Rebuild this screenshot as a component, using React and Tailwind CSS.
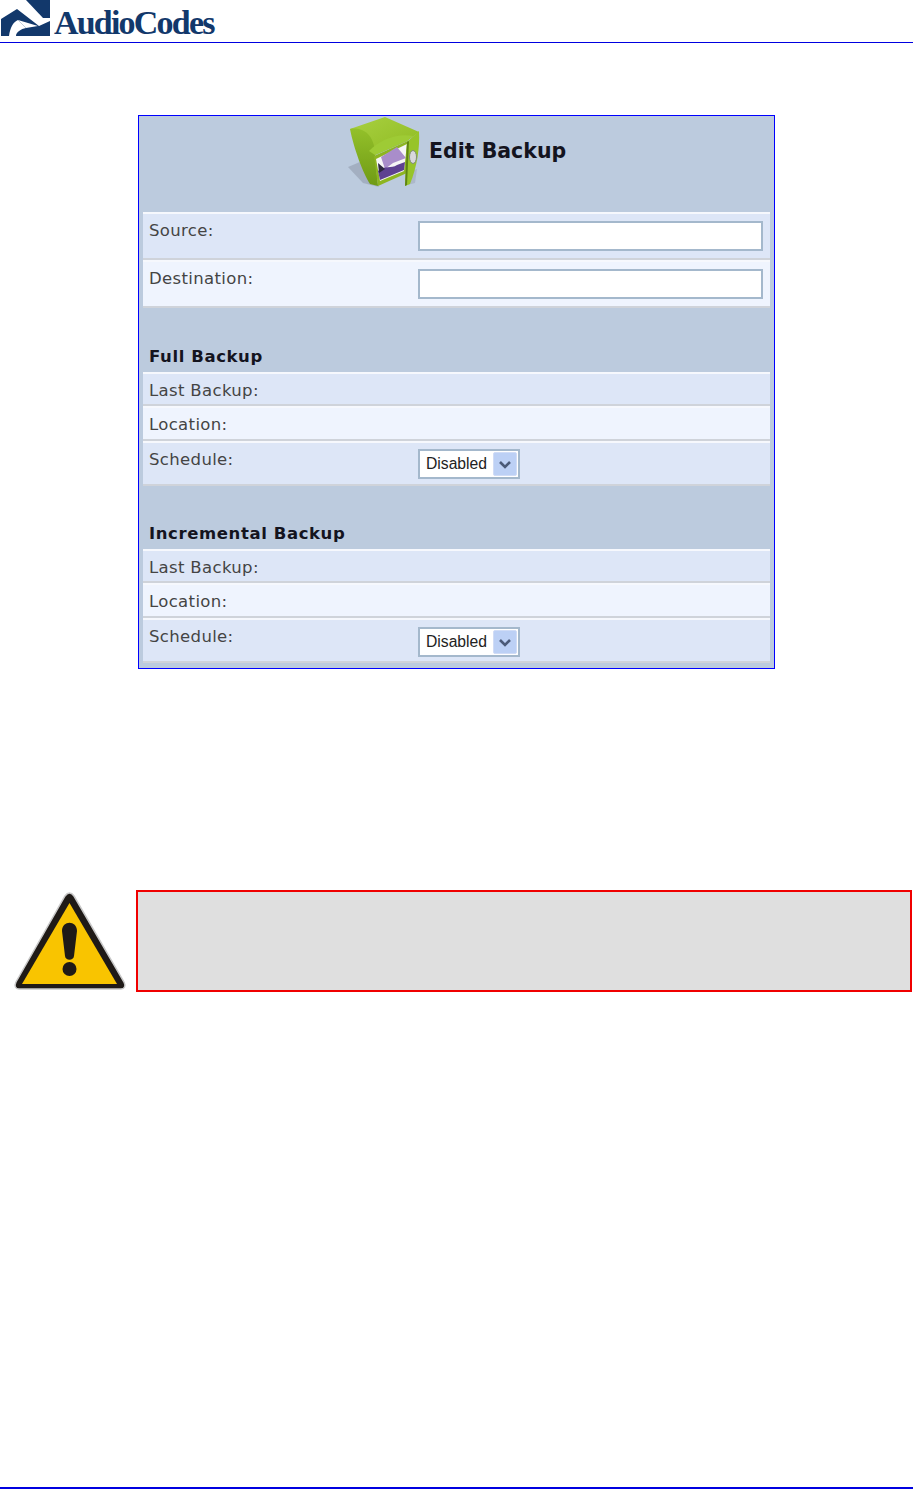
import React from 'react';

const labelFont = "font-['DejaVu_Sans',sans-serif]";

const LogoMark = () => (
    <svg width="49" height="37" viewBox="0 0 49 37" className="shrink-0">
        {/* upper right block */}
        <path d="M25 0 H49 V18 H42 Z" fill="#12386b" />
        {/* lower block under the white arch */}
        <path d="M0 19 L16 9 L38 26 L49 21 V36 H0 Z" fill="#12386b" />
        {/* white curve and wedge cut out of the block */}
        <path d="M8 36 C9 28 12 22 17 20 L25 28 C20 29 15 32 15 36 Z" fill="#fff" />
        <path d="M17 20 L37 26 L25 28 Z" fill="#fff" />
    </svg>
);

const SafeIcon = () => (
    <svg width="80" height="73" viewBox="0 3 80 73" className="shrink-0">
        <defs>
            <linearGradient id="safeTop" x1="0" y1="0" x2="1" y2="1">
                <stop offset="0" stopColor="#a8d040" />
                <stop offset="1" stopColor="#8fbb22" />
            </linearGradient>
            <linearGradient id="safeSide" x1="0" y1="0" x2="0" y2="1">
                <stop offset="0" stopColor="#93c02a" />
                <stop offset="1" stopColor="#6f9a14" />
            </linearGradient>
        </defs>
        <path d="M3 54 L22 46 L34 74 L18 70 Z" fill="#8e99aa" opacity="0.55" />
        <path d="M62 60 L72 56 L70 70 L62 72 Z" fill="#9ba6b6" opacity="0.5" />
        {/* body */}
        <path d="M5 16 L40 4 L74 19 L62 28 L30 42 Z" fill="url(#safeTop)" />
        <path d="M5 16 C14 14 30 18 30 42 L33 73 L25 71 C18 60 9 36 5 16 Z" fill="url(#safeSide)" />
        <path d="M24 38 C34 28 50 20 68 23 L62 28 L30 42 Z" fill="#9ecb35" />
        {/* opening */}
        <path d="M29 43 L65 27 L62 60 L33 73 Z" fill="#8db521" />
        <path d="M31 46 L62 31 L59 58 L35 68 Z" fill="#f6f6f6" />
        <path d="M36 44 L52 34 L61 45 L48 50 L40 56 Z" fill="#a98dca" />
        <path d="M33 58 C40 52 46 56 52 52 L60 49 L59 57 L35 67 Z" fill="#5e4191" />
        <path d="M33 50 L40 56 L34 60 Z" fill="#2e2840" />
        {/* open door */}
        <path d="M62 29 L74 18 C75 34 72 54 65 71 L60 73 Z" fill="#97c42a" />
        <path d="M62 29 L64 28 L62 72 L60 73 Z" fill="#5f8412" />
        <ellipse cx="68" cy="44" rx="3.500" ry="6.500" fill="#d8d8dc" stroke="#7f8a78" strokeWidth="1" />
    </svg>
);

const WarningIcon = () => (
    <svg width="114" height="100" viewBox="0 0 114 100" className="shrink-0">
        <path d="M56.500 3 C54.500 3 53 4.500 52 6 L3 92 C1 96 2.500 99 6 99 L108 99 C111.500 99 113 96 111 92 L61 6 C60 4.500 58.500 3 56.500 3 Z" fill="#1f1a17" stroke="#c9c9c9" strokeWidth="1.500" />
        <path d="M56.500 13 L9 94 L104 94 Z" fill="#f9c400" />
        <path d="M49 41 C49 30 64 30 64 41 L61 66 C60.500 71 52.500 71 52 66 Z" fill="#1f1a17" />
        <circle cx="56.500" cy="79" r="7" fill="#1f1a17" />
    </svg>
);

const SelectBox = ({ lift }) => (
    <div className={`${lift} w-[102px] h-[30px] bg-white border-2 border-[#a4b8cc] flex items-center justify-between pl-[6px] pr-[1px]`}>
        <span className="font-['Liberation_Sans',sans-serif] text-[#222] text-[16px] scale-x-[0.98] origin-left">Disabled</span>
        <span className="w-[24px] h-[24px] bg-[#bcd0f5] border border-[#d0dcf6] rounded-[2px] flex items-center justify-center">
            <svg width="14" height="9" viewBox="0 0 14 9">
                <path d="M2 2 L7 7 L12 2" fill="none" stroke="#4b5a78" strokeWidth="2.600" />
            </svg>
        </span>
    </div>
);

const TextBox = () => (
    <div className="w-[345px] h-[30px] bg-white border-2 border-[#a4b8cc]" />
);

// one table row of the form: label on the left, optional control from x=418
const Row = ({ label, shade, height, children }) => (
    <div className={`${height} ${shade} border-t-2 border-t-[#f6f8fd] border-b-2 border-b-[#cfd3da] flex pl-[6px]`}>
        <span className={`w-[269px] shrink-0 text-[#444] text-[16.500px] tracking-[0.35px] leading-[20px] pt-[7px] ${labelFont}`}>{label}</span>
        <div className="pt-[7px]">{children}</div>
    </div>
);

const SectionTitle = ({ children, top }) => (
    <div className={`${top} pl-[6px] h-[24px] flex items-end pb-[5px]`}>
        <span className={`text-[#14141e] font-bold text-[16.500px] tracking-[0.6px] leading-[20px] ${labelFont}`}>{children}</span>
    </div>
);

const dark = 'bg-[#dde6f7]';
const light = 'bg-[#eff4fe]';

const App = () => {
    return (
        <div className="w-[913px] h-[1489px] bg-white flex flex-col overflow-hidden">
            <header className="h-[43px] shrink-0 border-b border-[#0000e0] flex items-start pl-[1px]">
                <LogoMark />
                <span className="ml-[4px] mt-[3px] text-[#12386b] font-['Liberation_Serif',serif] font-bold text-[34px] leading-[40px] tracking-[-1.800px]">AudioCodes</span>
            </header>

            <div className="grow">
                <section className="mt-[72px] ml-[138px] w-[637px] h-[554px] bg-[#bccbde] border border-[#0000ff] px-[4px]">
                    <div className="h-[96px] flex items-start pl-[202px]">
                        <SafeIcon />
                        <span className={`ml-[4px] mt-[21px] text-[#14141e] font-bold text-[20.500px] leading-[28px] ${labelFont}`}>Edit Backup</span>
                    </div>

                    <Row label="Source:" shade={dark} height="h-[48px]"><TextBox /></Row>
                    <Row label="Destination:" shade={light} height="h-[48px]"><TextBox /></Row>

                    <SectionTitle top="mt-[40px]">Full Backup</SectionTitle>
                    <Row label="Last Backup:" shade={dark} height="h-[34px]" />
                    <Row label="Location:" shade={light} height="h-[35px]" />
                    <Row label="Schedule:" shade={dark} height="h-[45px]"><SelectBox lift="-mt-[1px]" /></Row>

                    <SectionTitle top="mt-[39px]">Incremental Backup</SectionTitle>
                    <Row label="Last Backup:" shade={dark} height="h-[34px]" />
                    <Row label="Location:" shade={light} height="h-[35px]" />
                    <Row label="Schedule:" shade={dark} height="h-[45px]"><SelectBox lift="mt-0" /></Row>
                </section>

                <div className="mt-[221px] ml-[13px] flex items-start">
                    <WarningIcon />
                    <div className="ml-[9px] w-[776px] h-[102px] bg-[#dfdfdf] border-2 border-[#f00000]" />
                </div>
            </div>

            <footer className="h-[2px] shrink-0 bg-[#0000e0]" />
        </div>
    );
};

export default App;
